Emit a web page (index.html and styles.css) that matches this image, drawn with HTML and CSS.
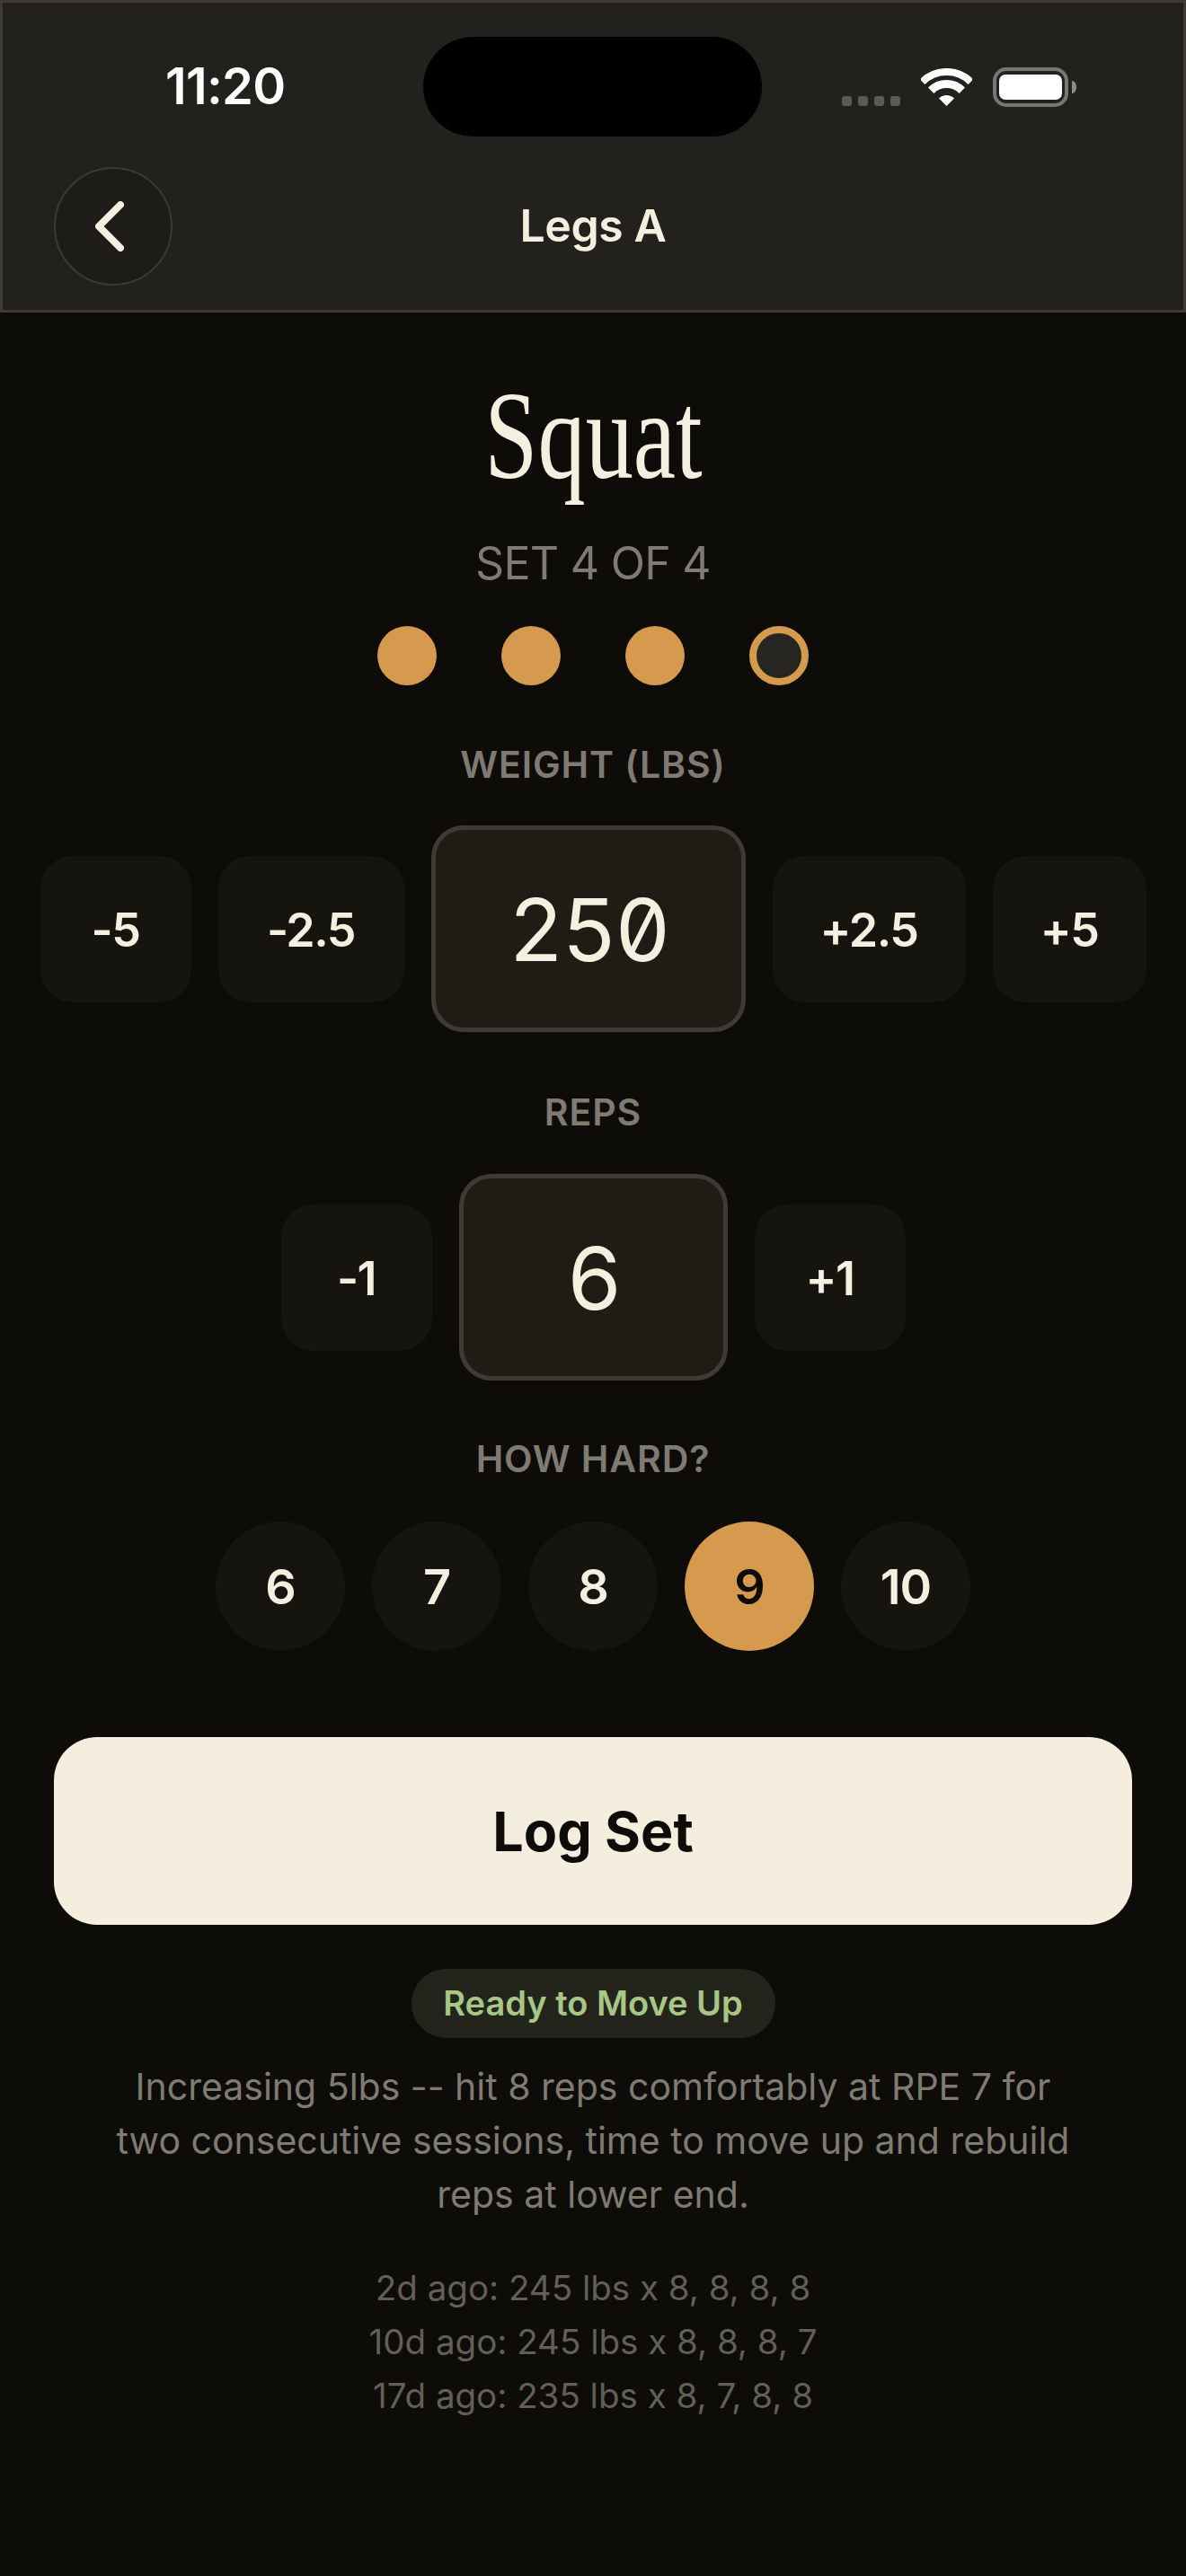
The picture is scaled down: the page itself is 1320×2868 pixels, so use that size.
FILE: index.html
```html
<!DOCTYPE html>
<html lang="en">
<head>
<meta charset="utf-8">
<title>Legs A</title>
<link rel="stylesheet" href="styles.css">
</head>
<body>
<header class="topbar">
  <div class="status">
    <span class="time">11:20</span>
    <span class="island"></span>
    <div class="status-icons">
      <div class="signal"><i></i><i></i><i></i><i></i></div>
      <svg class="wifi" width="57" height="42" viewBox="0 0 57 42"><path d="M1.6 15.1A38 38 0 0 1 55.4 15.1" fill="none" stroke="#fff" stroke-width="8"/><path d="M11.2 24.7A24.5 24.5 0 0 1 45.8 24.7" fill="none" stroke="#fff" stroke-width="9"/><path d="M28.5 42L20 33.5A12 12 0 0 1 37 33.5Z" fill="#fff"/></svg>
      <svg class="battery" width="93" height="44" viewBox="0 0 93 44"><rect x="2" y="2" width="80" height="40" rx="13" fill="none" stroke="#777" stroke-width="4"/><rect x="7" y="8" width="70" height="28" rx="7" fill="#fff"/><path d="M88 15c3 0 5 3 5 7s-2 7-5 7z" fill="#8a8a8a"/></svg>
    </div>
  </div>
  <div class="nav">
    <button class="back" aria-label="Back"><svg width="32" height="56" viewBox="0 0 32 56"><path d="M28 4L4 28L28 52" fill="none" stroke="#f5efe0" stroke-width="8" stroke-linecap="round" stroke-linejoin="round"/></svg></button>
    <h2 class="nav-title">Legs A</h2>
  </div>
</header>
<main class="screen">
  <h1 class="exercise"><span>Squat</span></h1>
  <p class="set-count">SET 4 OF 4</p>
  <div class="dots"><i class="dot"></i><i class="dot"></i><i class="dot"></i><i class="dot current"></i></div>

  <p class="label label-weight">WEIGHT (LBS)</p>
  <div class="stepper stepper-first">
    <button class="step w-a">-5</button>
    <button class="step w-b">-2.5</button>
    <div class="value w-value">250</div>
    <button class="step w-c">+2.5</button>
    <button class="step w-d">+5</button>
  </div>

  <p class="label label-reps">REPS</p>
  <div class="stepper">
    <button class="step w-a">-1</button>
    <div class="value r-value">6</div>
    <button class="step w-a">+1</button>
  </div>

  <p class="label label-hard">HOW HARD?</p>
  <div class="rpe">
    <button class="rpe-btn">6</button>
    <button class="rpe-btn">7</button>
    <button class="rpe-btn">8</button>
    <button class="rpe-btn active">9</button>
    <button class="rpe-btn">10</button>
  </div>

  <button class="log">Log Set</button>

  <span class="pill">Ready to Move Up</span>
  <p class="note">Increasing 5lbs -- hit 8 reps comfortably at RPE 7 for<br>two consecutive sessions, time to move up and rebuild<br>reps at lower end.</p>
  <div class="history">
    <p>2d ago: 245 lbs x 8, 8, 8, 8</p>
    <p>10d ago: 245 lbs x 8, 8, 8, 7</p>
    <p>17d ago: 235 lbs x 8, 7, 8, 8</p>
  </div>
</main>
</body>
</html>
```
FILE: styles.css
```css
* { box-sizing: border-box; margin: 0; padding: 0; }
html, body { background: #0d0c09; }
body { width: 1320px; height: 2868px; overflow: hidden; font-family: Inter, "Liberation Sans", sans-serif; color: #f5efe0; }
button { font: inherit; color: inherit; border: 0; }
.topbar { height: 348px; background: #22211d; border: 3px solid #3f3b34; }
.status { display: grid; grid-template-columns: 468px 377px 1fr; height: 146px; padding-top: 38px; }
.time { font-size: 56px; font-weight: 600; color: #fff; line-height: 70px; padding: 20px 0 0 181px; white-space: nowrap; letter-spacing: -0.7px; }
.island { width: 377px; height: 111px; border-radius: 56px; background: #000; }
.status-icons { display: flex; align-items: flex-end; height: 80px; padding-left: 89px; }
.signal { display: flex; gap: 7px; margin-bottom: 3px; margin-right: 23px; }
.signal i { width: 11px; height: 11px; border-radius: 3px; background: #5a5a58; }
.wifi { margin-right: 23px; margin-bottom: 3px; }
.battery { margin-bottom: 2px; }
.nav { display: flex; align-items: center; justify-content: center; position: relative; height: 196px; }
.back { position: absolute; left: 57px; top: 37px; width: 132px; height: 132px; border-radius: 50%; background: #1d1c19; border: 2px solid #3b3a35; display: flex; align-items: center; justify-content: center; padding-right: 8px; }
.nav-title { font-size: 50px; font-weight: 600; letter-spacing: -0.4px; margin-top: 8px; }
.screen { display: flex; flex-direction: column; align-items: center; }
.exercise { margin-top: 67px; height: 140px; font-family: "Liberation Serif", serif; font-weight: 400; font-size: 140px; line-height: 140px; }
.exercise span { display: inline-block; transform: scaleX(0.76); }
.set-count { margin-top: 42px; font-size: 50px; line-height: 60px; color: #7f7b73; font-weight: 400; letter-spacing: -0.7px; }
.dots { display: flex; gap: 72px; margin-top: 40px; }
.dot { width: 66px; height: 66px; border-radius: 50%; background: #d69a4e; }
.dot.current { background: #272522; border: 8px solid #d69a4e; }
.label { font-size: 41px; font-weight: 600; line-height: 50px; color: #7f7b73; letter-spacing: 0.9px; text-align: center; }
.label-weight { margin-top: 63px; }
.label-reps { margin-top: 64px; }
.label-hard { margin-top: 62px; }
.stepper { display: flex; align-items: center; justify-content: center; gap: 30px; margin-top: 44px; }
.stepper-first { margin-top: 43px; }
.step { height: 163px; border-radius: 36px; background: #16140f; font-size: 52px; font-weight: 600; display: block; letter-spacing: -1.5px; padding-top: 3px; }
.w-a { width: 168px; }
.w-b { width: 207px; }
.w-c { width: 215px; }
.w-d { width: 171px; }
.value { height: 230px; border-radius: 36px; background: #1f1c16; border: 5px solid #3f3a34; display: flex; align-items: center; justify-content: center; font-size: 96px; font-weight: 400; letter-spacing: -3px; padding-top: 2px; font-feature-settings: "zero" 1, "tnum" 1; }
.w-value { width: 350px; }
.r-value { width: 299px; }
.rpe { display: flex; gap: 30px; margin-top: 45px; }
.rpe-btn { width: 144px; height: 144px; border-radius: 50%; background: #16140f; font-size: 54px; font-weight: 600; letter-spacing: -1px; }
.rpe-btn.active { background: #d69a4e; color: #0d0c09; }
.log { margin-top: 96px; width: 1200px; height: 209px; border-radius: 48px; background: #f5eede; color: #0d0c09; font-size: 61px; font-weight: 700; }
.pill { margin-top: 49px; width: 405px; height: 77px; border-radius: 39px; background: #23251c; color: #a8c686; font-size: 38px; font-weight: 600; line-height: 77px; text-align: center; }
.note { margin-top: 24px; font-size: 41px; line-height: 60px; color: #7f7b73; text-align: center; }
.history { margin-top: 44px; font-size: 38.5px; line-height: 60px; color: #625f58; text-align: center; }
```
